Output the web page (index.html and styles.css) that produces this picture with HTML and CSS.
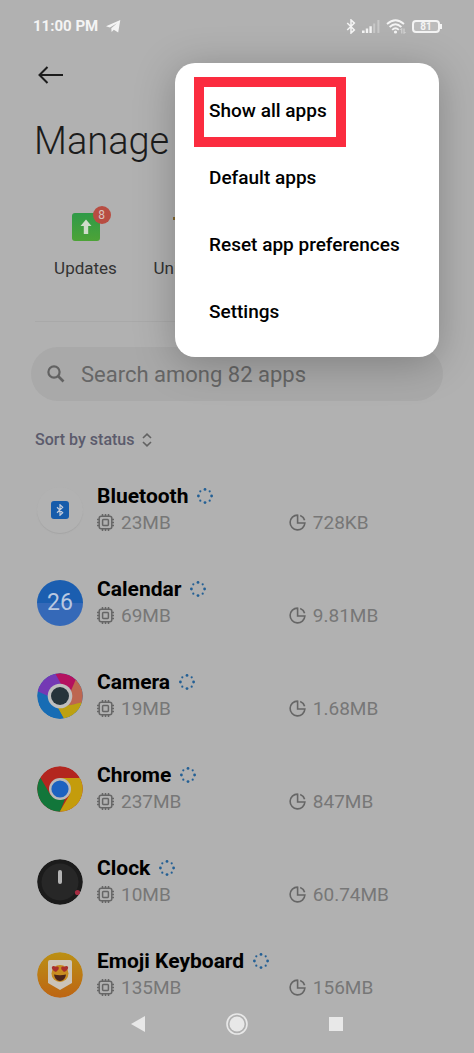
FILE: index.html
```html
<!DOCTYPE html>
<html lang="en">
<head>
  <meta charset="UTF-8">
  <meta name="viewport" content="width=device-width, initial-scale=1.0">
  <title>Manage apps</title>
  <link rel="stylesheet" href="styles.css">
</head>
<body>
  <!-- shared icons -->
  <svg class="sprite" aria-hidden="true">
    <symbol id="chip" viewBox="0 0 17 17">
      <g fill="none" stroke="currentColor" stroke-width="1.5">
        <rect x="2.2" y="2.2" width="12.6" height="12.6" rx="2"/>
        <rect x="5.6" y="5.6" width="5.8" height="5.8" rx="0.8"/>
        <path d="M5.5 0v2M8.5 0v2M11.5 0v2M5.5 15v2M8.5 15v2M11.5 15v2M0 5.5h2M0 8.5h2M0 11.5h2M15 5.5h2M15 8.5h2M15 11.5h2"/>
      </g>
    </symbol>
    <symbol id="pie" viewBox="0 0 17 17">
      <g fill="none" stroke="currentColor" stroke-width="1.6">
        <path d="M8.6 1.1A7.4 7.4 0 1 0 15.9 9H8.6V0.4"/>
        <path d="M11.2 1.5A7.4 7.4 0 0 1 15.6 6.2"/>
      </g>
    </symbol>
    <symbol id="spin" viewBox="0 0 16 16">
      <g fill="#235f94">
        <circle cx="8" cy="1.4" r="1.4"/><circle cx="8" cy="14.6" r="1.4"/>
        <circle cx="1.4" cy="8" r="1.4"/><circle cx="14.6" cy="8" r="1.4"/>
        <circle cx="3.3" cy="3.3" r="1.1"/><circle cx="12.7" cy="3.3" r="1.1"/>
        <circle cx="3.3" cy="12.7" r="1.1"/><circle cx="12.7" cy="12.7" r="1.1"/>
      </g>
    </symbol>
    <symbol id="bt" viewBox="0 0 10 16">
      <path d="M1 4.3L8.6 11.6L5 15V1L8.6 4.4L1 11.7" fill="none" stroke="currentColor" stroke-width="1.6"/>
    </symbol>
  </svg>

  <div class="phone">
    <div class="status-bar">
      <span class="time">11:00 PM</span>
      <svg class="plane" width="15" height="13" viewBox="0 0 15 13"><path d="M0 6.3L14.3 0L12.2 12.6L7.8 9.8L5.6 11.9L5.3 8.3L11 3.2L3.9 7.6Z" fill="#f4f4f4"/></svg>
      <div class="status-icons">
        <svg width="10" height="15"><use href="#bt"/></svg>
        <svg width="18" height="13" viewBox="0 0 18 13"><path d="M0 13v-2.6h2.6V13zM3.8 13V8.6h2.4V13zM7.4 13V6.2h2.4V13z" fill="#f4f4f4"/><path d="M11.2 13V3.4h2V13zM15.4 13V0h2V13z" fill="#c8c8c8"/></svg>
        <svg width="20" height="15" viewBox="0 0 20 15"><g fill="none" stroke="#f4f4f4" stroke-width="1.8"><path d="M1 5Q9.5 -2.6 18 5"/><path d="M3.6 8Q9.5 2.4 15.4 8"/><path d="M6.2 10.8Q9.5 7.6 12.8 10.8"/></g><circle cx="9.5" cy="13" r="1.6" fill="#f4f4f4"/><path d="M15.8 9.5v5M14.3 11l1.500-1.500M18 9.500v5M19.500 13l-1.500 1.500" stroke="#dedede" stroke-width="0.9"/></svg>
        <span class="battery">81</span>
      </div>
    </div>

    <header>
      <button type="button" class="back" aria-label="Back">
        <svg width="26" height="18" viewBox="0 0 26 18"><path d="M25 9H1.5M9.5 1L1.5 9L9.5 17" fill="none" stroke="#1c1c1c" stroke-width="2"/></svg>
      </button>
      <h1>Manage apps</h1>
    </header>

    <main>
      <div class="actions">
        <button type="button" class="action">
          <span class="action-icon">
            <svg width="28" height="28" viewBox="0 0 28 28"><defs><linearGradient id="green" x1="0" y1="0" x2="0" y2="1"><stop offset="0" stop-color="#2f9a48"/><stop offset="1" stop-color="#4da337"/></linearGradient></defs><rect width="28" height="28" rx="3" fill="url(#green)"/><path d="M14 6.5L19.5 13H16.2V21H11.8V13H8.5Z" fill="#d0dccb"/></svg>
            <span class="badge">8</span>
          </span>
          Updates
        </button>
        <button type="button" class="action">
          <span class="action-icon">
            <svg width="28" height="28" viewBox="0 0 28 28"><path d="M0 4h28v3H0z" fill="#82672d"/><path d="M4 9h20v19H4z" fill="#b08b3a"/></svg>
          </span>
          Uninstall
        </button>
      </div>

      <label class="search">
        <svg width="18" height="18" viewBox="0 0 18 18"><circle cx="7" cy="7" r="5.6" fill="none" stroke="#626262" stroke-width="2.2"/><path d="M11 11L16.5 16.5" stroke="#626262" stroke-width="2.6"/></svg>
        <input type="search" placeholder="Search among 82 apps" aria-label="Search apps">
      </label>

      <button type="button" class="sort">
        Sort by status
        <svg width="10" height="14" viewBox="0 0 10 14"><path d="M1 5L5 1.2L9 5M1 9L5 12.8L9 9" fill="none" stroke="#626262" stroke-width="1.6"/></svg>
      </button>

      <ul class="apps">
        <li class="app">
          <span class="app-icon bluetooth"><span><svg width="8" height="12"><use href="#bt"/></svg></span></span>
          <div class="app-info">
            <h2>Bluetooth <svg width="16" height="16"><use href="#spin"/></svg></h2>
            <p><svg width="17" height="17"><use href="#chip"/></svg>23MB</p>
            <p><svg width="17" height="17"><use href="#pie"/></svg>728KB</p>
          </div>
        </li>
        <li class="app">
          <span class="app-icon calendar">26</span>
          <div class="app-info">
            <h2>Calendar <svg width="16" height="16"><use href="#spin"/></svg></h2>
            <p><svg width="17" height="17"><use href="#chip"/></svg>69MB</p>
            <p><svg width="17" height="17"><use href="#pie"/></svg>9.81MB</p>
          </div>
        </li>
        <li class="app">
          <svg class="app-icon" viewBox="0 0 46 46">
            <clipPath id="round"><circle cx="23" cy="23" r="22.8"/></clipPath>
            <g clip-path="url(#round)">
              <rect width="46" height="46" fill="#176cb4"/>
              <path d="M0 18L11 23L26 10L19 0H0Z" fill="#7439b4"/>
              <path d="M18 0L24 11L36 23L40 7L34 0Z" fill="#b4115f"/>
              <path d="M39 6L33 20L30 33L46 30V6Z" fill="#bd6650"/>
              <path d="M46 29L34 32L20 33L27 46H46Z" fill="#bda112"/>
              <path d="M8 22L14 32L20 34L27 46H10L0 36Z" fill="#176cb4"/>
            </g>
            <circle cx="23" cy="23" r="12.3" fill="#bebebe"/>
            <circle cx="23" cy="23" r="9" fill="#26343b"/>
          </svg>
          <div class="app-info">
            <h2>Camera <svg width="16" height="16"><use href="#spin"/></svg></h2>
            <p><svg width="17" height="17"><use href="#chip"/></svg>19MB</p>
            <p><svg width="17" height="17"><use href="#pie"/></svg>1.68MB</p>
          </div>
        </li>
        <li class="app">
          <svg class="app-icon" viewBox="0 0 46 46">
            <g clip-path="url(#round)">
              <rect width="46" height="46" fill="#b3261f"/>
              <path d="M3 11L13.5 29L28 33L23 46H0V11Z" fill="#12763a"/>
              <path d="M23 12H46V46H22.5L33 28Z" fill="#c49c0c"/>
            </g>
            <circle cx="23" cy="23" r="11" fill="#bababa"/>
            <circle cx="23" cy="23" r="8.6" fill="#1c62c0"/>
          </svg>
          <div class="app-info">
            <h2>Chrome <svg width="16" height="16"><use href="#spin"/></svg></h2>
            <p><svg width="17" height="17"><use href="#chip"/></svg>237MB</p>
            <p><svg width="17" height="17"><use href="#pie"/></svg>847MB</p>
          </div>
        </li>
        <li class="app">
          <svg class="app-icon" viewBox="0 0 46 46">
            <circle cx="23" cy="23" r="22.8" fill="#1b1b1b"/>
            <circle cx="23" cy="23" r="18.5" fill="#272727"/>
            <rect x="21" y="11" width="4" height="14" rx="2" fill="#b4b4b4"/>
            <circle cx="40.5" cy="33.5" r="2.6" fill="#a52c42"/>
          </svg>
          <div class="app-info">
            <h2>Clock <svg width="16" height="16"><use href="#spin"/></svg></h2>
            <p><svg width="17" height="17"><use href="#chip"/></svg>10MB</p>
            <p><svg width="17" height="17"><use href="#pie"/></svg>60.74MB</p>
          </div>
        </li>
        <li class="app">
          <svg class="app-icon" viewBox="0 0 46 46">
            <defs><linearGradient id="orange" x1="0" y1="0" x2="0" y2="1"><stop offset="0" stop-color="#bb9014"/><stop offset="1" stop-color="#bd6514"/></linearGradient></defs>
            <circle cx="23" cy="23" r="22.8" fill="url(#orange)"/>
            <path d="M13 8H33Q35 8 35 10V31L23 38L11 31V10Q11 8 13 8Z" fill="#cbc4b8"/>
            <circle cx="23" cy="21.5" r="8.5" fill="#c88c20"/>
            <path d="M19 20C14 18 14 14 16.5 14C18 14 19 15 19 15C21 14 22.500 15 21.500 17.500ZM27 20C32 18 32 14 29.500 14C28 14 27 15 27 15C25 14 23.500 15 24.500 17.500Z" fill="#a92f2b"/>
            <path d="M17 22.5Q23 24 29 22.5Q28 29 23 29Q18 29 17 22.5Z" fill="#4b2419"/>
          </svg>
          <div class="app-info">
            <h2>Emoji Keyboard <svg width="16" height="16"><use href="#spin"/></svg></h2>
            <p><svg width="17" height="17"><use href="#chip"/></svg>135MB</p>
            <p><svg width="17" height="17"><use href="#pie"/></svg>156MB</p>
          </div>
        </li>
      </ul>
    </main>

    <nav class="nav-bar">
      <button type="button" aria-label="Back"><svg width="22" height="22" viewBox="0 0 22 22"><path d="M4 11L18 3V19Z" fill="#e8e8e8"/></svg></button>
      <button type="button" aria-label="Home"><svg width="22" height="22" viewBox="0 0 22 22"><circle cx="11" cy="11" r="10" fill="none" stroke="#e8e8e8" stroke-width="1.6"/><circle cx="11" cy="11" r="7.5" fill="#e8e8e8"/></svg></button>
      <button type="button" aria-label="Recent apps"><svg width="22" height="22" viewBox="0 0 22 22"><rect x="4" y="4" width="14" height="14" fill="#e8e8e8"/></svg></button>
    </nav>

    <div class="menu">
      <button type="button" class="selected">Show all apps</button>
      <button type="button">Default apps</button>
      <button type="button">Reset app preferences</button>
      <button type="button">Settings</button>
    </div>
  </div>
</body>
</html>
```

FILE: styles.css
```css
*, *::before, *::after {
  margin: 0;
  padding: 0;
  box-sizing: border-box;
}
body {
  font-family: Roboto, sans-serif;
  background: #b1b1b1;
  color: #000;
}
button {
  border: none;
  background: none;
  font-family: inherit;
  cursor: pointer;
}
svg {
  display: block;
  flex-shrink: 0;
}
.sprite {
  position: absolute;
  width: 0;
  height: 0;
}
.phone {
  position: relative;
  min-height: 100vh;
  overflow: hidden;
}

/* status bar */
.status-bar {
  display: flex;
  align-items: center;
  height: 52px;
  padding: 0 32px 0 33px;
  color: #f4f4f4;
}
.time {
  font-size: 15px;
  font-weight: 700;
}
.plane {
  margin-left: 8px;
}
.status-icons {
  display: flex;
  align-items: center;
  gap: 6px;
  margin-left: auto;
}
.battery {
  position: relative;
  width: 28px;
  height: 13px;
  margin-right: 2px;
  border: 2px solid #f4f4f4;
  border-radius: 4px;
  background: #bcbcbc;
  font-size: 10px;
  font-weight: 700;
  line-height: 9px;
  text-align: center;
}
.battery::after {
  content: "";
  position: absolute;
  top: 2px;
  right: -4px;
  width: 2px;
  height: 5px;
  background: #f4f4f4;
}

/* header */
header {
  padding: 0 34px;
}
.back {
  display: flex;
  align-items: center;
  height: 46px;
  padding: 0 4px;
}
h1 {
  margin-top: 19px;
  font-size: 38px;
  font-weight: 300;
  line-height: 48px;
  color: #1c1c1c;
}

main {
  padding: 0 31px;
}
.actions {
  display: grid;
  grid-template-columns: repeat(4, 1fr);
  height: 157px;
  margin: 0 4px;
  padding-top: 48px;
  border-bottom: 1px solid #a9a9a9;
}
.action {
  display: flex;
  flex-direction: column;
  align-items: center;
  gap: 16px;
  font-size: 17px;
  line-height: 22px;
  color: #333;
}
.action-icon {
  position: relative;
}
.badge {
  position: absolute;
  top: -7px;
  right: -11px;
  width: 18px;
  height: 18px;
  border-radius: 50%;
  background: #b84d42;
  color: #d8c2be;
  font-size: 12px;
  line-height: 18px;
}

.search {
  display: flex;
  align-items: center;
  gap: 16px;
  height: 54px;
  margin-top: 25px;
  padding: 0 16px;
  border-radius: 27px;
  background: #a9a9a9;
}
.search input {
  flex: 1;
  min-width: 0;
  border: none;
  outline: none;
  background: none;
  font-family: inherit;
  font-size: 22px;
}
.search input::placeholder {
  color: #666;
  opacity: 1;
}
.sort {
  display: flex;
  align-items: center;
  gap: 8px;
  margin: 29px 4px 0;
  font-size: 16px;
  font-weight: 500;
  line-height: 20px;
  color: #5b5b6c;
}

/* app list */
.apps {
  display: flex;
  flex-direction: column;
  gap: 40px;
  margin-top: 33px;
  padding: 0 5px 0 6px;
  list-style: none;
}
.app {
  display: flex;
  align-items: center;
  gap: 14px;
}
.app-icon {
  display: flex;
  align-items: center;
  justify-content: center;
  flex-shrink: 0;
  width: 46px;
  height: 46px;
  border-radius: 50%;
}
.bluetooth {
  background: #b2b2b2;
  box-shadow: 0 1px 1px #a5a5a5;
}
.bluetooth span {
  padding: 3px 5px;
  border-radius: 3px;
  background: #165cab;
  color: #c4cddb;
}
.calendar {
  background: linear-gradient(#1b5eb0 50%, #3569b8 50%);
  color: #b9c8e0;
  font-size: 23px;
}
.app-info {
  flex: 1;
  display: grid;
  grid-template-columns: 9fr 7fr;
}
.app-info h2 {
  grid-column: 1 / 3;
  display: flex;
  align-items: center;
  gap: 9px;
  font-size: 21px;
  font-weight: 700;
  line-height: 26px;
}
.app-info p {
  display: flex;
  align-items: center;
  gap: 7px;
  font-size: 19px;
  line-height: 27px;
  color: #777;
}
.app-info p svg {
  color: #666;
}

.nav-bar {
  display: flex;
  align-items: center;
  justify-content: center;
  gap: 77px;
  height: 46px;
}

/* popup menu */
.menu {
  position: absolute;
  top: 63px;
  right: 35px;
  width: 264px;
  padding: 14px 0 12px;
  border-radius: 20px;
  background: #fff;
  box-shadow: 0 6px 40px rgba(0, 0, 0, 0.25);
}
.menu button {
  position: relative;
  display: block;
  width: 100%;
  height: 67px;
  padding: 0 34px;
  font-size: 19px;
  font-weight: 500;
  text-align: left;
  white-space: nowrap;
}
.menu .selected::after {
  content: "";
  position: absolute;
  top: 0;
  left: 19px;
  width: 152px;
  height: 70px;
  border: 10px solid #fb2c3f;
}
```
